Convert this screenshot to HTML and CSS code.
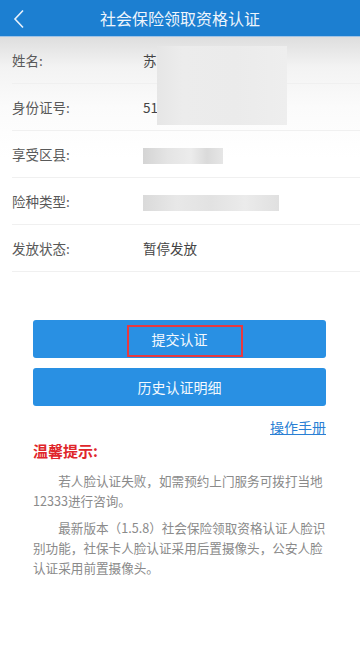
FILE: index.html
```html
<!DOCTYPE html>
<html lang="zh">
<head>
<meta charset="utf-8">
<link rel="stylesheet" href="styles.css">
</head>
<body>
<div class="page">
  <header class="topbar">
    <svg class="back" width="12" height="20" viewBox="0 0 12 20"><path d="M10 1.5 L2 10 L10 18.5" fill="none" stroke="#e8f1fb" stroke-width="1.6"/></svg>
    <h1 class="title">社会保险领取资格认证</h1>
  </header>
  <section class="info">
    <div class="blur blur-name"></div>
    <div class="row"><span class="label">姓名:</span><span class="value">苏</span></div>
    <div class="row"><span class="label">身份证号:</span><span class="value">51</span></div>
    <div class="row"><span class="label">享受区县:</span><span class="value"><span class="blur-inline w80"></span></span></div>
    <div class="row"><span class="label">险种类型:</span><span class="value"><span class="blur-inline w136"></span></span></div>
    <div class="row"><span class="label">发放状态:</span><span class="value">暂停发放</span></div>
  </section>
  <section class="actions">
    <button class="btn btn-submit"><span class="btn-text">提交认证</span><span class="hl"></span></button>
    <button class="btn">历史认证明细</button>
    <div class="manual"><a class="link">操作手册</a></div>
    <h2 class="tips-title">温馨提示:</h2>
    <p class="tip">若人脸认证失败，如需预约上门服务可拨打当地12333进行咨询。</p>
    <p class="tip">最新版本（1.5.8）社会保险领取资格认证人脸识别功能，社保卡人脸认证采用后置摄像头，公安人脸认证采用前置摄像头。</p>
  </section>
</div>
</body>
</html>
```

FILE: styles.css
```css
* { box-sizing: border-box; }
html, body { margin: 0; padding: 0; background: #fff; }
body { font-family: "Noto Sans CJK SC", "Noto Sans", sans-serif; width: 360px; height: 651px; overflow: hidden; }
.page { width: 360px; }
.topbar {
  height: 37px;
  background: #1c7fd1;
  border-bottom: 1px solid #9fc3e6;
  display: flex;
  align-items: center;
  justify-content: center;
  position: relative;
}
.back { position: absolute; left: 13px; top: 9px; }
.title { margin: 0; font-size: 16px; font-weight: 400; color: #eef5fc; letter-spacing: 0; }
.info {
  position: relative;
  background: linear-gradient(#dedede 0px, #f3f3f3 30px, #fbfbfb 70px, #fff 120px);
}
.row {
  height: 47px;
  display: flex;
  align-items: center;
  margin: 0 0 0 12px;
  border-bottom: 1px solid #f0f0f0;
  font-size: 13.5px;
  color: #444;
}
.label { width: 131px; color: #595959; }
.value { color: #444; }
.blur {
  position: absolute;
  left: 157px;
  top: 9px;
  width: 130px;
  height: 79px;
  background: linear-gradient(90deg, #e6e6e6, #ececec 20%, #ebebeb 60%, #eeeeee);
}
.blur-inline { display: inline-block; height: 16px; vertical-align: middle; background: linear-gradient(90deg, #d4d4d4, #e4e4e4 30%, #ececec 60%, #dadada 80%, #e6e6e6); }
.w80 { width: 80px; }
.w136 { width: 136px; background: linear-gradient(90deg, #dadada, #e8e8e8 25%, #e2e2e2 50%, #ebebeb 75%, #e0e0e0); }
.actions { padding: 48px 34px 0 33px; }
.btn {
  display: flex;
  align-items: center;
  justify-content: center;
  width: 293px;
  height: 38px;
  border: 0;
  border-radius: 3px;
  background: #2990e3;
  color: #f4f9fe;
  font-family: inherit;
  font-size: 14px;
  margin: 0 0 10px;
  padding: 0;
}
.btn-submit { position: relative; }
.hl {
  position: absolute;
  left: 94px;
  top: 5px;
  width: 116px;
  height: 32px;
  border: 2px solid #e8393f;
}
.manual { display: flex; justify-content: flex-end; margin-top: 7px; height: 22px; }
.link { color: #2a7fd4; font-size: 14px; text-decoration: underline; line-height: 22px; }
.tips-title { margin: 0; font-size: 15px; font-weight: 700; color: #e0262b; line-height: 26px; }
.tip {
  margin: 7px 0 0;
  font-size: 12.6px;
  line-height: 20px;
  color: #8a8a8a;
  text-indent: 2em;
}
```
